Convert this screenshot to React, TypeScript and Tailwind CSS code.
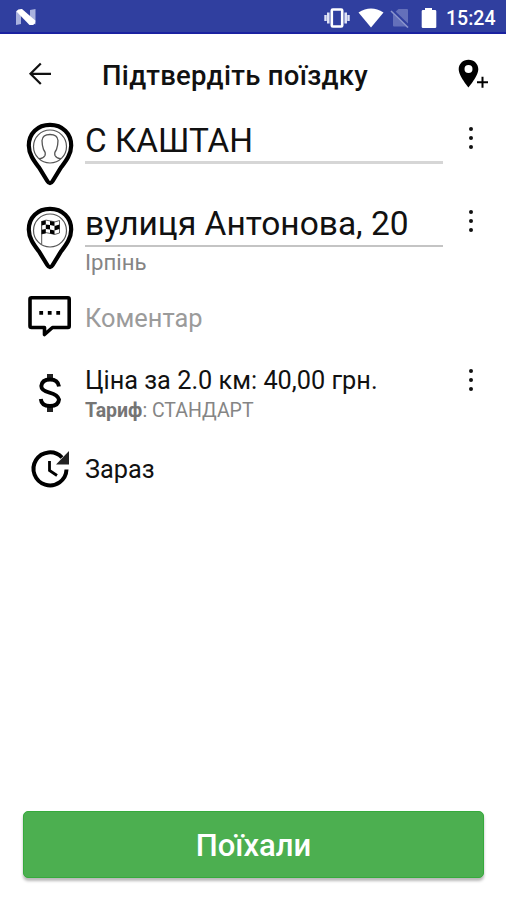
import type { ReactNode } from "react";

function StatusBar() {
  return (
    <div className="flex h-[34px] shrink-0 items-center border-b-2 border-[#1a22a0] bg-[#303f9f] text-white">
      <svg className="mt-[2px] ml-[15px] h-[18px] w-[22px]" viewBox="0 0 22 18">
        <path d="M1 3 6 6.500V16L1 17Z" fill="#a9b2de" />
        <path d="M15 2 20.500 1V16.500L15 12Z" fill="#a9b2de" />
        <path d="M1.200 3.300Q3 .8 7 1L20.300 12.500Q20.600 16 18 17L14.500 17Z" fill="#fff" />
      </svg>
      <svg className="mt-[3px] ml-[286px] h-[22px] w-[30px]" viewBox="0 0 30 22">
        <rect x="8.800" y="2.500" width="10.400" height="17" rx="1" fill="none" stroke="#fff" strokeWidth="2.600" />
        <path d="M5.300 5.500v11M22.700 5.500v11" stroke="#dfe3f5" strokeWidth="2.600" />
        <path d="M2.500 8v6M25.500 8v6" stroke="#dfe3f5" strokeWidth="2.400" />
      </svg>
      <svg className="mt-[3px] ml-[5px] h-[20px] w-[26px]" viewBox="0 0 26 20">
        <path d="M.5 4.500Q13-3.500 25.500 4.500L13 19.500Z" fill="#fff" />
      </svg>
      <svg className="mt-[3px] ml-[6px] h-[20px] w-[20px]" viewBox="0 0 20 20">
        <path d="M3 6 8.500 1H17Q18 1 18 2V18.500H4Q3 18.500 3 17.500Z" fill="#6470ba" />
        <path d="M1 1.500 19 19" stroke="#303f9f" strokeWidth="3.400" />
        <path d="M1 3 18 19.500" stroke="#8c96cd" strokeWidth="1.600" />
      </svg>
      <svg className="mt-[3px] ml-[10px] h-[22px] w-[18px]" viewBox="0 0 18 22">
        <path d="M5 1H12V3H15Q16.300 3 16.300 4.300V20Q16.300 21 15 21H3Q1.700 21 1.700 20V4.300Q1.700 3 3 3H5Z" fill="#fff" />
      </svg>
      <span className="mt-[6px] ml-[8px] text-[19.5px] leading-6 font-medium">15:24</span>
    </div>
  );
}

function Pin({ children }: { children: ReactNode }) {
  return (
    <svg className="block h-[66px] w-[50px]" viewBox="0 0 50 66">
      <path
        d="M25 3.800C12.500 3.800 3.800 12.500 3.800 24.500 3.800 33.500 9.500 40.500 14 46.500L22.300 60Q25 64.500 27.700 60L36 46.500C40.500 40.500 46.200 33.500 46.200 24.500 46.200 12.500 37.500 3.800 25 3.800Z"
        fill="#fff"
        stroke="#000"
        strokeWidth="4.200"
      />
      <circle cx="25" cy="25.500" r="16.500" fill="none" stroke="#555" strokeWidth="1.200" />
      {children}
    </svg>
  );
}

function PersonPin() {
  return (
    <Pin>
      <path
        d="M14 37.500Q18 38 20 34.500Q21 31.500 18.500 28.500Q17 24 17 19.500Q17.500 13.500 25 13.500T33 19.500Q33 24 31.500 28.500Q29 31.500 30 34.500Q32 38 36 37.500"
        fill="none"
        stroke="#555"
        strokeWidth="1.300"
      />
    </Pin>
  );
}

function FlagPin() {
  return (
    <Pin>
      <path d="M16.700 16V39" stroke="#555" strokeWidth="1" />
      <path d="M16.700 16.500Q21 14 25.500 16T34.500 15.500V28Q30 30.500 25.500 28.500T16.700 29Z" fill="#fff" stroke="#333" strokeWidth=".8" />
      <path
        d="M16.700 16.300 20.800 15.500V19.500L16.700 20.500ZM25 16 29.500 17V21L25 20ZM20.800 19.500 25 20V24.500L20.800 24ZM29.500 21 34.500 19.500V24L29.500 25.500ZM16.700 24.700 20.800 24V28.300L16.700 29ZM25 24.500 29.500 25.500V29.500L25 28.500Z"
        fill="#000"
      />
    </Pin>
  );
}

function MoreButton() {
  return (
    <button className="flex h-7 w-7 flex-col items-center justify-center gap-[5.3px]">
      <i className="h-[4px] w-[4px] rounded-full bg-[#111]" />
      <i className="h-[4px] w-[4px] rounded-full bg-[#111]" />
      <i className="h-[4px] w-[4px] rounded-full bg-[#111]" />
    </button>
  );
}

function Row({ className, icon, more, children }: { className: string; icon: ReactNode; more?: string; children: ReactNode }) {
  return (
    <div className={"flex items-start " + className}>
      <div className="flex w-[85px] shrink-0 justify-center pl-[14px]">{icon}</div>
      <div className="w-[358px] shrink-0 whitespace-nowrap">{children}</div>
      {more && (
        <div className={"ml-[14px] " + more}>
          <MoreButton />
        </div>
      )}
    </div>
  );
}

export default function App() {
  return (
    <main className="flex h-[900px] w-[506px] flex-col overflow-hidden bg-white font-[Roboto,sans-serif] text-[#111]">
      <StatusBar />
      <header className="flex h-[85px] shrink-0 items-start">
        <svg className="mt-[27px] ml-[27px] h-[26px] w-[26px]" viewBox="0 0 26 26" fill="none" stroke="#111" strokeWidth="2.200">
          <path d="M24 12.800H3.800M13.800 2.500 3.500 12.800 13.800 23" />
        </svg>
        <h1 className="mt-[26px] ml-[49px] w-[300px] text-[27.5px] leading-8 font-medium tracking-[0.3px] whitespace-nowrap">Підтвердіть поїздку</h1>
        <svg className="mt-[25px] ml-[55px] h-[32px] w-[34px]" viewBox="0 0 34 32">
          <path d="M11.500.800C5.800.800 1.700 5 1.700 10.300 1.700 17 11.500 28.500 11.500 28.500S21.300 17 21.300 10.300C21.300 5 17.200.800 11.500.800ZM11.500 14A4 4 0 1 1 11.500 6 4 4 0 0 1 11.500 14Z" fill="#000" fillRule="evenodd" />
          <path d="M20 23.200H31M25.500 17.700V28.700" stroke="#000" strokeWidth="2" />
        </svg>
      </header>

      <Row className="h-[84px]" more="pt-[5px]" icon={<div className="mt-[2px]"><PersonPin /></div>}>
        <div className="h-[45px] border-b-[3px] border-[#d6d6d6] pt-px text-[33.3px] leading-[42px]">С КАШТАН</div>
      </Row>
      <Row className="h-[89px]" more="pt-[4px]" icon={<div className="mt-[2px]"><FlagPin /></div>}>
        <div className="h-[44px] border-b-2 border-[#c4c4c4] text-[33.5px] leading-[41px]">вулиця Антонова, 20</div>
        <div className="pt-px text-[22.2px] leading-7 text-[#858585]">Ірпінь</div>
      </Row>
      <Row
        className="h-[72px]"
        icon={
          <svg className="mt-[2px] h-[46px] w-[46px]" viewBox="0 0 46 46">
            <path d="M4.500 3.700H41Q42.200 3.700 42.200 5.200V32Q42.200 33.500 41 33.500H25.500L17.500 40.500V33.500H4.500Q3 33.500 3 32V5.200Q3 3.700 4.500 3.700Z" fill="none" stroke="#000" strokeWidth="3.600" strokeLinejoin="round" />
            <path d="M12.300 18.800h3.800M20.800 18.800h3.800M29.300 18.800h3.800" stroke="#000" strokeWidth="3.800" />
          </svg>
        }
      >
        <div className="pt-[10px] text-[25.4px] leading-8 text-[#9b9b9b]">Коментар</div>
      </Row>
      <Row
        className="h-[86px]"
        more="pt-[2px]"
        icon={
          <svg className="mt-[8px] h-[42px] w-[26px]" viewBox="0 0 26 42">
            <path d="M10 2H16V7H10ZM10 34H16V40H10Z" fill="#222" />
            <path d="M22 14.500Q21 7.500 13 7.500T4.300 14Q4.300 18.500 12.500 20.600T22 27.500Q21.500 34 13 34T3.800 27" fill="none" stroke="#000" strokeWidth="3.900" />
          </svg>
        }
      >
        <div className="pt-px text-[25.3px] leading-8">Ціна за 2.0 км: 40,00 грн.</div>
        <div className="text-[19.5px] leading-7 text-[#858585]"><b className="font-bold text-[#757575]">Тариф</b>: СТАНДАРТ</div>
      </Row>
      <Row
        className="h-[60px]"
        icon={
          <svg className="-mt-[3px] h-[44px] w-[44px]" viewBox="0 0 44 44">
            <path d="M34 10.500A16.500 16.500 0 1 0 38.500 22.500" fill="none" stroke="#000" strokeWidth="4" />
            <path d="M41 4V17.500H28Z" fill="#222" />
            <path d="M21.500 14V23.500L29 28.500" fill="none" stroke="#000" strokeWidth="2.800" />
          </svg>
        }
      >
        <div className="pt-[4px] text-[25.3px] leading-8">Зараз</div>
      </Row>

      <button className="mt-auto mr-[22px] mb-[22px] ml-[23px] h-[67px] shrink-0 rounded-[5px] border border-[#36aa3c] bg-[#4caf50] pt-[2px] text-[31px] leading-9 font-medium text-white shadow-[0_3px_3px_rgba(0,0,0,0.28)]">
        Поїхали
      </button>
    </main>
  );
}
